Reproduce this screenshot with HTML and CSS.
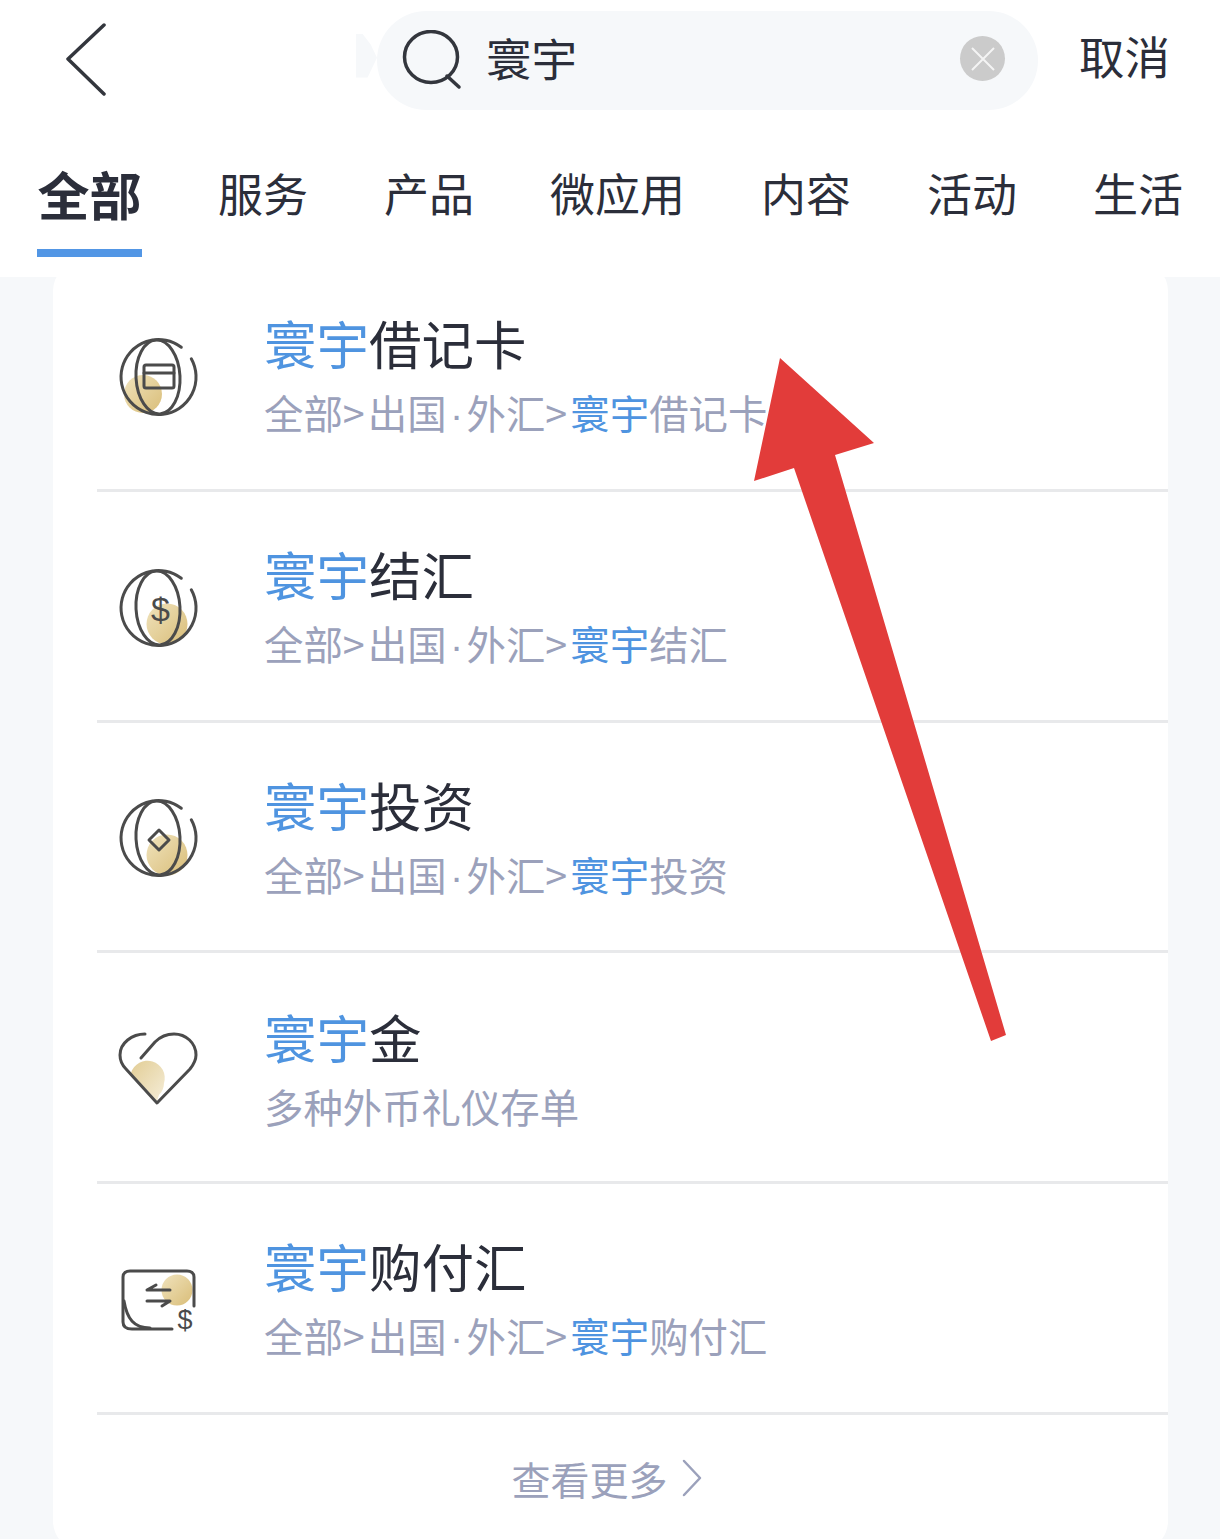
FILE: index.html
```html
<!DOCTYPE html>
<html lang="zh-CN">

<head>
    <meta charset="UTF-8">
    <meta name="viewport" content="width=device-width, initial-scale=1.0">
    <title>搜索 - 寰宇</title>
    <link rel="stylesheet" href="styles.css">
</head>

<body>
    <svg class="defs" width="0" height="0">
        <defs>
            <linearGradient id="gold" x1="0" y1="0" x2="1" y2="1">
                <stop offset="0" stop-color="#f0e3bd" />
                <stop offset="1" stop-color="#d9bd78" />
            </linearGradient>
            <linearGradient id="goldFlip" x1="0" y1="0" x2="1" y2="1">
                <stop offset="0" stop-color="#e2cd95" />
                <stop offset="1" stop-color="#f5edd8" />
            </linearGradient>
            <symbol id="globe" viewBox="0 0 120 120">
                <path d="M91.300 37.800A37.500 37.500 0 1 1 81.300 26.250" />
                <ellipse cx="58" cy="56" rx="22" ry="37" transform="rotate(-3 58 56)" />
            </symbol>
        </defs>
    </svg>

    <header class="top">
        <div class="search-row">
            <svg class="back" width="40" height="74" viewBox="0 0 40 74">
                <path d="M38 2L2 36L38 71" />
            </svg>
            <div class="search-box">
                <svg class="search-icon" width="60" height="60" viewBox="0 0 60 60">
                    <ellipse cx="29" cy="27" rx="26.500" ry="25.500" />
                    <path d="M45 46L57 57" />
                </svg>
                <span class="search-text">寰宇</span>
                <span class="clear">
                    <svg width="26" height="26" viewBox="0 0 26 26">
                        <path d="M2 2L24 24M24 2L2 24" />
                    </svg>
                </span>
            </div>
            <span class="cancel">取消</span>
        </div>
        <nav class="tabs">
            <a class="tab active">全部</a>
            <a class="tab">服务</a>
            <a class="tab">产品</a>
            <a class="tab">微应用</a>
            <a class="tab">内容</a>
            <a class="tab">活动</a>
            <a class="tab">生活</a>
        </nav>
    </header>

    <main class="card">
        <div class="row">
            <svg class="icon" width="120" height="120" viewBox="0 0 120 120">
                <circle class="fill" cx="43" cy="73" r="19" />
                <use href="#globe" width="120" height="120" />
                <rect x="44" y="44" width="30" height="23" rx="2" />
                <path d="M44 52H74" />
            </svg>
            <div class="text">
                <div class="title"><em>寰宇</em>借记卡</div>
                <div class="sub">全部<b>&gt;</b>出国<i>·</i>外汇<b>&gt;</b><em>寰宇</em>借记卡</div>
            </div>
        </div>
        <div class="row">
            <svg class="icon" width="120" height="120" viewBox="0 0 120 120">
                <circle class="fill" cx="67" cy="72" r="20.500" />
                <use href="#globe" width="120" height="120" />
                <text class="dollar" x="60.500" y="68.500" text-anchor="middle">$</text>
            </svg>
            <div class="text">
                <div class="title"><em>寰宇</em>结汇</div>
                <div class="sub">全部<b>&gt;</b>出国<i>·</i>外汇<b>&gt;</b><em>寰宇</em>结汇</div>
            </div>
        </div>
        <div class="row">
            <svg class="icon" width="120" height="120" viewBox="0 0 120 120">
                <circle class="fill" cx="67" cy="73" r="20.500" />
                <use href="#globe" width="120" height="120" />
                <path d="M59 48L69 58L59 68L49 58Z" />
            </svg>
            <div class="text">
                <div class="title"><em>寰宇</em>投资</div>
                <div class="sub">全部<b>&gt;</b>出国<i>·</i>外汇<b>&gt;</b><em>寰宇</em>投资</div>
            </div>
        </div>
        <div class="row">
            <svg class="icon up" width="120" height="120" viewBox="0 0 120 120">
                <path class="fill-flip" d="M31 62A17 17 0 0 1 64 72C64 77 62 81 59 84L57 90Z" />
                <path d="M45 23C32 23 20 32 20 44C20 50 22 54 26 58L57 92L90 58C94 53 96 49 96 44C96 32 86 23 74 23C66 23 60 26 55 31L41 47" />
            </svg>
            <div class="text">
                <div class="title"><em>寰宇</em>金</div>
                <div class="sub">多种外币礼仪存单</div>
            </div>
        </div>
        <div class="row">
            <svg class="icon up" width="120" height="120" viewBox="0 0 120 120">
                <circle class="fill" cx="77" cy="49" r="15.500" />
                <path d="M72 88H32C26 88 23 86 23 81V36C23 32 26 30 30 30H87C91 30 94 32 94 36V65" />
                <path d="M24 60C27 78 34 87 50 87" />
                <path d="M70 49H47L56 44M47 60H70L62 65" />
                <text class="dollar small" x="85" y="88" text-anchor="middle">$</text>
            </svg>
            <div class="text">
                <div class="title"><em>寰宇</em>购付汇</div>
                <div class="sub">全部<b>&gt;</b>出国<i>·</i>外汇<b>&gt;</b><em>寰宇</em>购付汇</div>
            </div>
        </div>
        <div class="more">
            <span>查看更多</span>
            <svg width="20" height="38" viewBox="0 0 20 38">
                <path d="M2 2L18 19L2 36" />
            </svg>
        </div>
    </main>

    <svg class="arrow" width="1220" height="1539" viewBox="0 0 1220 1539">
        <polygon points="780,358 874,443 835,455 1006,1035 991,1041 794,468 754,481" />
    </svg>
</body>

</html>
```

FILE: styles.css
```css
html,
body {
    margin: 0;
    height: 1539px;
    overflow: hidden;
}

body {
    position: relative;
    background-color: #f6f8fa;
    color: #2b2e3a;
    font-family: "Noto Sans CJK SC", "Liberation Sans", sans-serif;
}

.defs {
    position: absolute;
}

em,
i {
    font-style: normal;
}

/* top bar */
.top {
    position: relative;
    z-index: 1;
    height: 277px;
    background-color: #fff;
}

.search-row {
    display: flex;
    align-items: center;
    height: 120px;
}

.back {
    margin-left: 66px;
    margin-right: 271px;
}

.back path,
.search-icon ellipse,
.search-icon path {
    fill: none;
    stroke: #33363d;
    stroke-width: 3.500;
    stroke-linecap: round;
    stroke-linejoin: round;
}

.search-box {
    position: relative;
    display: flex;
    align-items: center;
    box-sizing: border-box;
    width: 661px;
    height: 99px;
    padding-left: 25px;
    background-color: #f6f8fa;
    border-radius: 50px;
}

.search-box::before {
    content: "";
    position: absolute;
    left: -21px;
    top: 23px;
    width: 21px;
    height: 44px;
    background-color: #f6f8fa;
    clip-path: polygon(0 0, 30% 0, 70% 25%, 100% 55%, 70% 85%, 55% 100%, 0 100%);
}

.search-text {
    margin-left: 24px;
    margin-top: -6px;
    font-size: 45.500px;
    line-height: 60px;
}

.clear {
    display: flex;
    justify-content: center;
    align-items: center;
    width: 45px;
    height: 45px;
    margin-left: auto;
    margin-right: 33px;
    margin-top: -3px;
    background-color: #cbcbcb;
    border-radius: 50%;
}

.clear path {
    fill: none;
    stroke: #f4f4f4;
    stroke-width: 2;
}

.cancel {
    margin-left: 41px;
    margin-top: -10px;
    font-size: 45.500px;
    line-height: 60px;
}

.tabs {
    display: flex;
    gap: 76px;
    margin-left: 37px;
}

.tab {
    box-sizing: border-box;
    height: 137px;
    padding-top: 37px;
    font-size: 45px;
    line-height: 72px;
}

.tab.active {
    width: 105px;
    padding-top: 38px;
    font-size: 52px;
    font-weight: 700;
    text-align: center;
    border-bottom: 8px solid #5296e5;
}

/* result list */
.card {
    box-sizing: border-box;
    width: 1115px;
    height: 1290px;
    margin-top: -16px;
    margin-left: 53px;
    padding-left: 44px;
    background-color: #fff;
    border-radius: 30px;
}

.row {
    display: flex;
    align-items: center;
    box-sizing: border-box;
    height: 230.750px;
    border-bottom: 3px solid #e8e9eb;
}

.icon {
    flex: none;
    margin-top: 12px;
    margin-left: 3px;
    fill: none;
    stroke: #4b4b4b;
    stroke-width: 3;
    stroke-linecap: round;
    stroke-linejoin: round;
}

.icon.up {
    margin-top: 7px;
}

.icon use {
    fill: none;
}

.icon .fill {
    fill: url(#gold);
    stroke: none;
}

.icon .fill-flip {
    fill: url(#goldFlip);
    stroke: none;
}

.icon .dollar {
    fill: #4b4b4b;
    stroke: none;
    font-family: "Liberation Sans", sans-serif;
    font-size: 34px;
}

.icon .dollar.small {
    font-size: 27px;
}

.text {
    margin-left: 44px;
    padding-top: 6px;
}

.title {
    font-size: 52.500px;
    line-height: 72px;
}

.title em,
.sub em {
    color: #4f94e0;
}

.sub {
    font-size: 39.400px;
    line-height: 68px;
    color: #9ba1bb;
}

.sub b {
    display: inline-block;
    width: 25px;
    font-weight: 400;
}

.sub i {
    display: inline-block;
    width: 20px;
    font-family: "Liberation Sans", sans-serif;
    text-align: center;
}

.more {
    display: flex;
    justify-content: center;
    align-items: center;
    gap: 14px;
    height: 126px;
    padding-right: 52px;
    font-size: 39px;
    color: #9ba1bb;
}

.more path {
    fill: none;
    stroke: #9ba1bb;
    stroke-width: 2.500;
    stroke-linecap: round;
    stroke-linejoin: round;
}

/* annotation drawn over the screenshot */
.arrow {
    position: absolute;
    left: 0;
    top: 0;
    z-index: 2;
}

.arrow polygon {
    fill: #e23c3a;
}
```
